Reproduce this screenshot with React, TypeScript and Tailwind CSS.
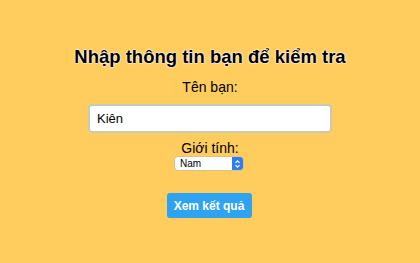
import React from 'react';

export default function App() {
  return (
    <div className="min-h-[263px] w-full bg-[#ffcc5e] flex flex-col items-center pt-[45px] font-['Liberation_Sans',Arial,sans-serif] text-black">
      <h1
        className="text-[18.5px] leading-[24px] font-bold"
        style={{ textShadow: '0 0 2px #fff, 0 0 2px #fff, 0 0 1px #fff' }}
      >
        Nhập thông tin bạn để kiểm tra
      </h1>

      <label className="mt-[10px] text-[14px] leading-[16px]">Tên bạn:</label>
      <div className="mt-[9px] w-[244px] h-[29px] bg-white border-2 border-[#c9cbb4] rounded-[4px] flex items-center px-[7px] text-[13px]">
        Kiên
      </div>

      <label className="mt-[7px] text-[14px] leading-[16px]">Giới tính:</label>
      <div className="mt-[1px] mr-[2px] w-[68px] h-[13px] bg-white rounded-[3px] shadow-[0_0_0_0.5px_#b8b8b8] flex items-center text-[10px] leading-none">
        <span className="flex-1 pl-[5px]">Nam</span>
        <span className="w-[11px] h-[13px] bg-[#2f7df6] rounded-r-[3px] flex items-center justify-center">
          <svg width="7" height="10" viewBox="0 0 7 10" fill="none" stroke="#fff" strokeWidth="1.2">
            <path d="M1.5 3.8 L3.5 1.8 L5.5 3.8" />
            <path d="M1.5 6.2 L3.5 8.2 L5.5 6.2" />
          </svg>
        </span>
      </div>

      <button className="mt-[23px] mr-[2px] w-[85px] h-[25px] bg-[#2ea3f2] text-white text-[12px] font-bold rounded-[3px]">
        Xem kết quả
      </button>
    </div>
  );
}
